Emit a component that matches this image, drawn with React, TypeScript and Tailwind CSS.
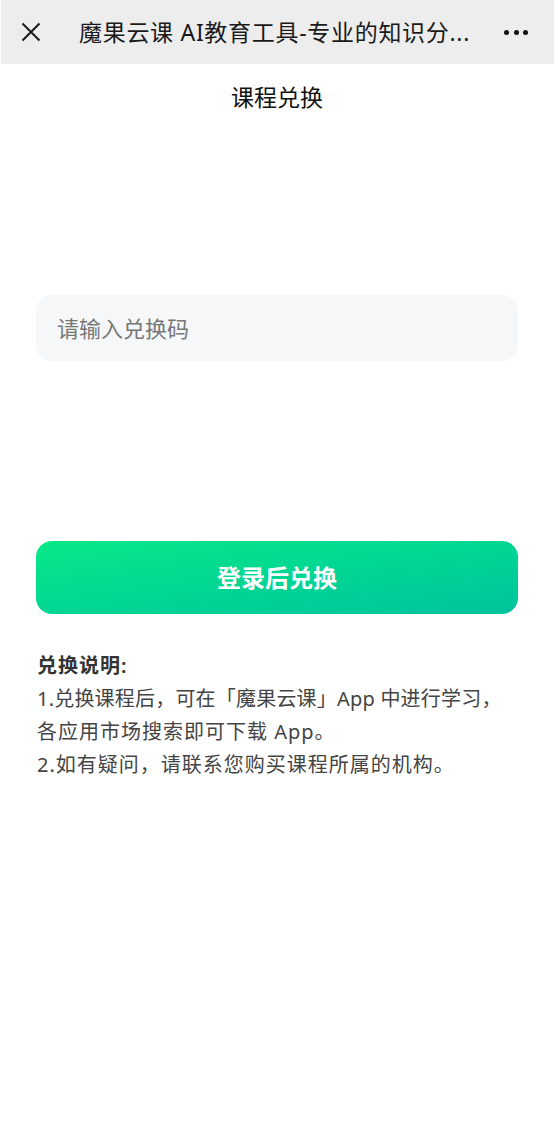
import React from "react";

const font = { fontFamily: '"Noto Sans", "Noto Sans CJK SC", sans-serif' };

export default function App() {
  return (
    <div className="w-[558px] min-h-[1130px] bg-white" style={font}>
      <div className="ml-px w-[553px] h-16 bg-[#ededed] flex items-center">
        <div className="w-[58px] flex justify-center">
          <svg width="20" height="20" viewBox="0 0 20 20" className="ml-[1px]">
            <path d="M1.5 1.5 L18.5 18.5 M18.5 1.5 L1.5 18.5" stroke="#1a1a1a" strokeWidth="2" strokeLinecap="butt" />
          </svg>
        </div>
        <div className="ml-[20px] text-[23px] tracking-[0.7px] text-[#1a1a1a] whitespace-nowrap leading-none">
          魔果云课 AI教育工具-专业的知识分...
        </div>
        <div className="flex-1" />
        <div className="mr-[26px] flex items-center gap-[4.5px]">
          <span className="block w-[5px] h-[5px] rounded-full bg-[#111]" />
          <span className="block w-[5px] h-[5px] rounded-full bg-[#111]" />
          <span className="block w-[5px] h-[5px] rounded-full bg-[#111]" />
        </div>
      </div>
      <div className="w-[554px]">
        <div className="h-[66px] flex items-center justify-center text-[23px] text-[#111]">
          课程兑换
        </div>
        <div className="px-9 pt-[165px]">
          <div className="h-[66px] rounded-2xl bg-[#f6f7f9] flex items-center px-[21px] text-[22px] text-[#777]">
            请输入兑换码
          </div>
          <div className="mt-[180px] h-[73px] rounded-2xl bg-gradient-to-br from-[#08e987] to-[#00c39c] flex items-center justify-center text-white text-[24px] font-bold">
            登录后兑换
          </div>
          <div className="mt-[35px] text-[20px] tracking-[1px] leading-[33px] text-[#444] pl-px whitespace-nowrap">
            <div className="font-semibold text-[#333]">兑换说明:</div>
            <div className="tracking-[0.2px]">1.兑换课程后，可在「魔果云课」App 中进行学习，</div>
            <div>各应用市场搜索即可下载 App。</div>
            <div>2.如有疑问，请联系您购买课程所属的机构。</div>
          </div>
        </div>
      </div>
    </div>
  );
}
